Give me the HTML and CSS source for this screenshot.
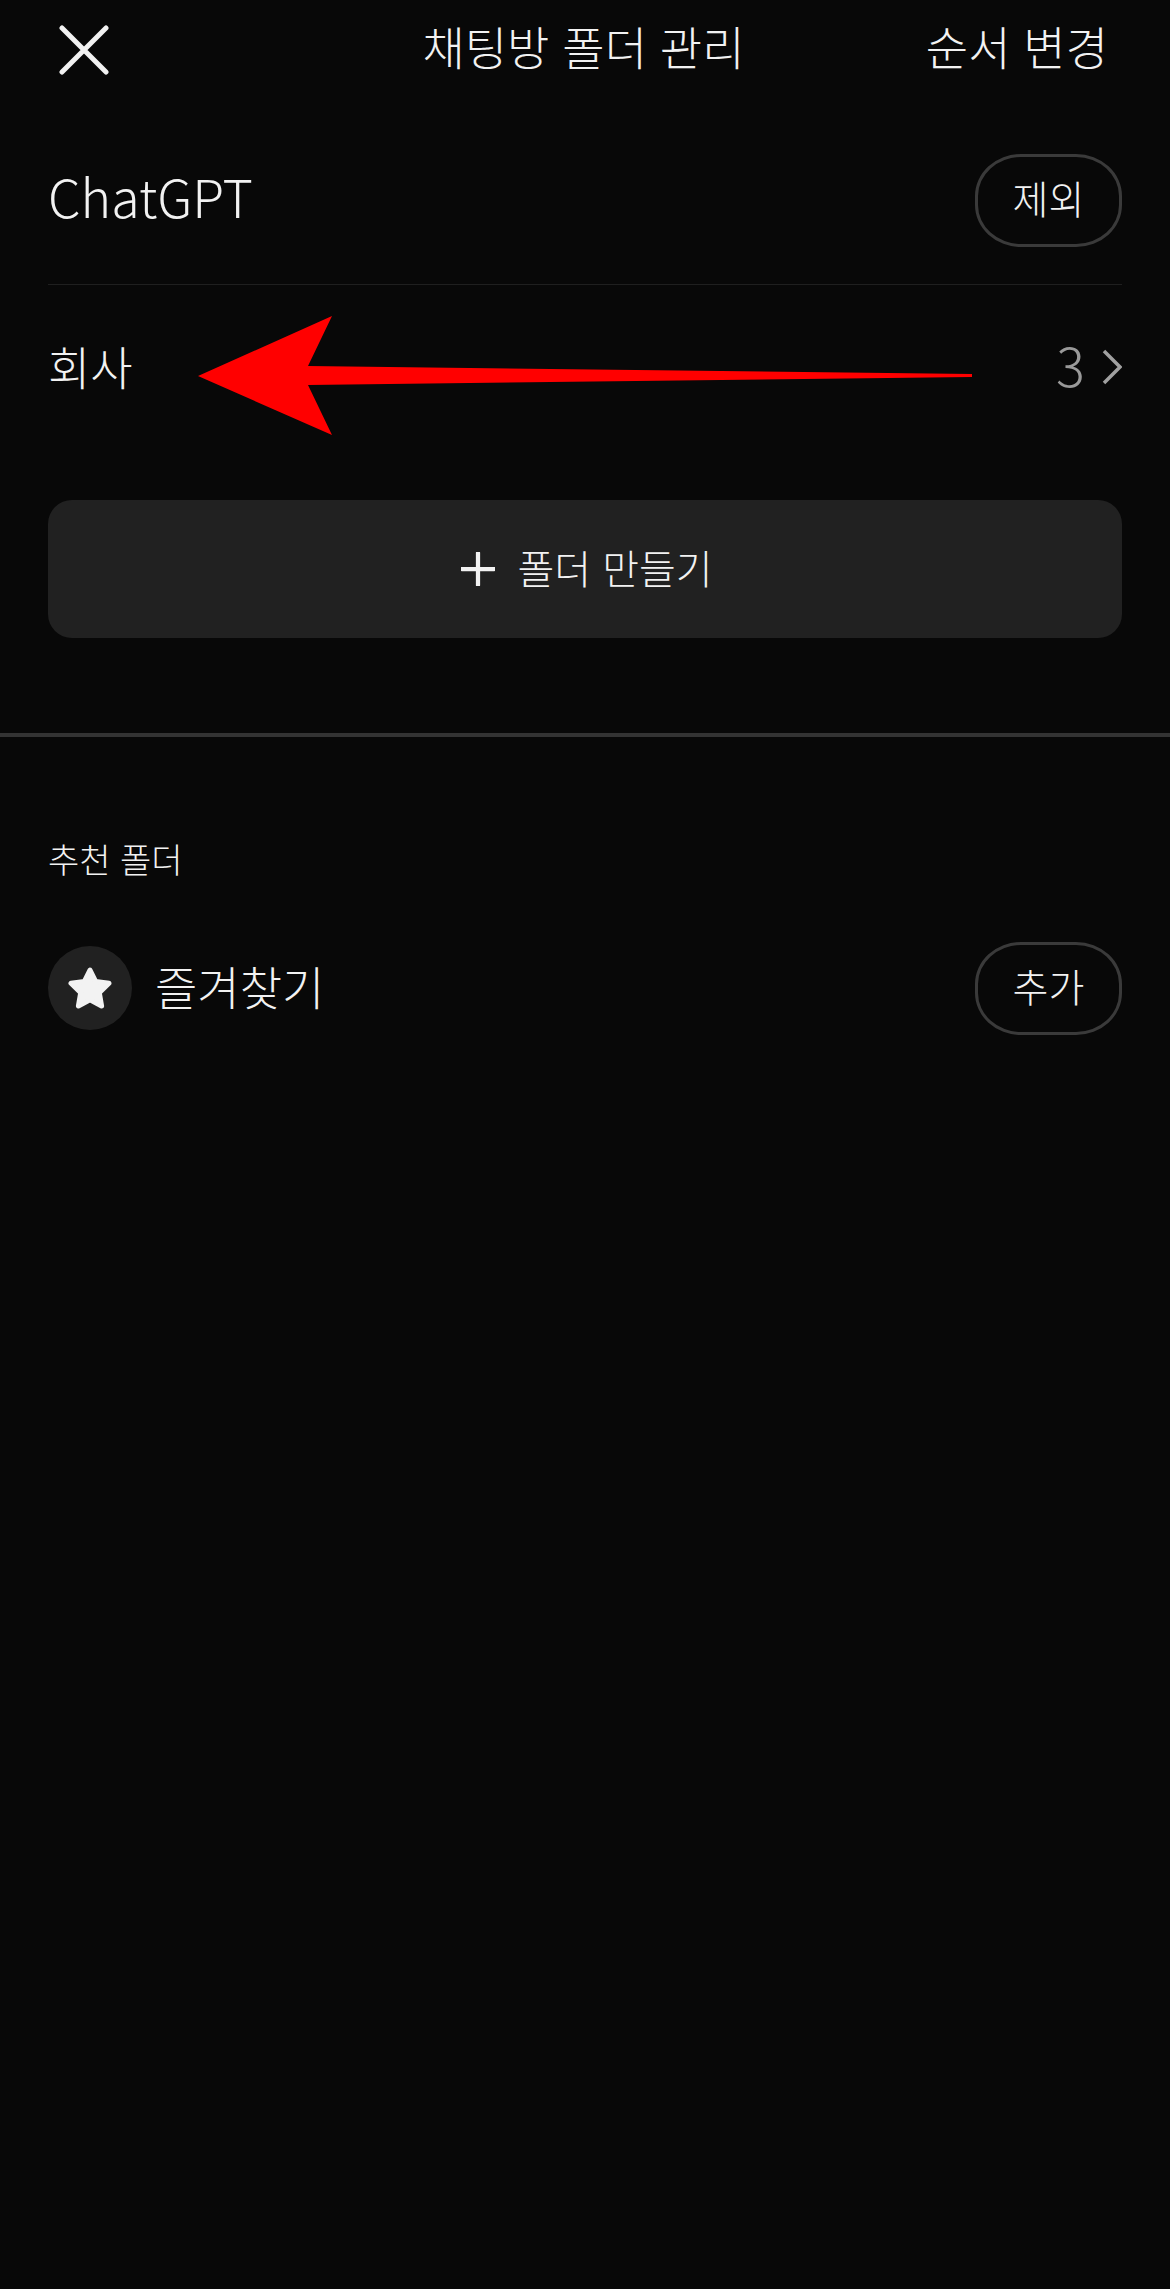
FILE: index.html
```html
<!DOCTYPE html>
<html lang="ko">
<head>
  <meta charset="UTF-8">
  <title>채팅방 폴더 관리</title>
  <link rel="stylesheet" href="styles.css">
</head>
<body>
  <!-- Top Bar -->
  <header class="top-bar">
    <svg class="close-icon" viewBox="0 0 50 50" width="50" height="50">
      <path d="M3 3 L47 47 M47 3 L3 47" />
    </svg>
    <h1 class="title">채팅방 폴더 관리</h1>
    <span class="reorder">순서 변경</span>
  </header>

  <!-- Folder List -->
  <section class="folders">
    <div class="row row-first">
      <span class="row-name name-latin">ChatGPT</span>
      <span class="pill">제외</span>
    </div>
    <div class="row row-second">
      <span class="row-name">회사</span>
      <span class="count">3
        <svg class="chevron" viewBox="0 0 20 36" width="20" height="36">
          <path d="M2 2 L18 18 L2 34" />
        </svg>
      </span>
    </div>
    <div class="add-button">
      <svg class="plus-icon" viewBox="0 0 36 36" width="36" height="36">
        <path d="M18 1 V35 M1 18 H35" />
      </svg>
      <span class="add-text">폴더 만들기</span>
    </div>
  </section>

  <div class="section-line"></div>

  <!-- Suggested -->
  <section class="suggested">
    <h2 class="suggested-label">추천 폴더</h2>
    <div class="row">
      <div class="row-left">
        <span class="star-badge">
          <svg viewBox="0 0 44 42" width="44" height="42">
            <path class="star" d="M22 3 L27.6 14.4 L41 16.3 L31.3 25.8 L33.6 39 L22 32.8 L10.4 39 L12.7 25.8 L3 16.3 L16.4 14.4 Z" />
          </svg>
        </span>
        <span class="row-name name-fav">즐겨찾기</span>
      </div>
      <span class="pill">추가</span>
    </div>
  </section>

  <!-- Annotation -->
  <svg class="red-arrow" viewBox="0 0 1170 2289" width="1170" height="2289">
    <polygon points="198,376 332,316 308,366 972,374 972,377 308,385 332,435" />
  </svg>
</body>
</html>
```

FILE: styles.css
```css
/* Basic Reset */
* {
  box-sizing: border-box;
  margin: 0;
  padding: 0;
}

body {
  position: relative;
  width: 1170px;
  height: 2289px;
  overflow: hidden;
  background-color: #080808;
  color: #f2f2f2;
  font-family: "Noto Sans CJK KR", "Noto Sans", sans-serif;
  font-weight: 300;
}

/* Top Bar */
.top-bar {
  display: grid;
  grid-template-columns: 1fr auto 1fr;
  align-items: center;
  height: 94px;
  padding: 0 62px 4px 59px;
  font-size: 46px;
}

.close-icon {
  margin-top: 10px;
}

.close-icon path {
  fill: none;
  stroke: #f2f2f2;
  stroke-width: 5;
  stroke-linecap: round;
}

.title {
  font-size: 46px;
  font-weight: 300;
}

.reorder {
  justify-self: end;
}

/* Folder List */
.folders {
  padding: 60px 48px 95px;
}

.row {
  display: flex;
  justify-content: space-between;
  align-items: center;
}

.row-first {
  padding-bottom: 37px;
  border-bottom: 1px solid #1f1f1f;
}

.row-second {
  height: 160px;
}

.row-name {
  font-size: 46px;
}

.name-latin {
  padding-bottom: 10px;
  font-size: 52px;
}

.name-fav {
  padding-bottom: 8px;
}

.pill {
  display: flex;
  align-items: center;
  justify-content: center;
  width: 147px;
  height: 93px;
  padding-bottom: 7px;
  border: 3px solid #3a3a3a;
  border-radius: 46px / 42px;
  font-size: 39px;
}

.count {
  display: flex;
  align-items: center;
  gap: 17px;
  padding-bottom: 3px;
  color: #999;
  font-size: 54px;
}

.chevron {
  margin-top: 6px;
}

.chevron path {
  fill: none;
  stroke: #a0a0a0;
  stroke-width: 3.5;
}

.add-button {
  display: flex;
  align-items: center;
  justify-content: center;
  gap: 22px;
  height: 138px;
  margin-top: 55px;
  border-radius: 24px;
  background-color: #212121;
  font-size: 40px;
}

.add-text {
  padding-bottom: 5px;
}

.plus-icon {
  margin-left: 4px;
  width: 34px;
  height: 34px;
}

.plus-icon path {
  fill: none;
  stroke: #f2f2f2;
  stroke-width: 4.5;
  stroke-linecap: round;
}

.section-line {
  height: 4px;
  background-color: #333;
}

/* Suggested */
.suggested {
  padding: 100px 48px 0;
}

.suggested-label {
  height: 44px;
  margin-bottom: 61px;
  font-size: 34px;
  font-weight: 300;
  line-height: 44px;
}

.row-left {
  display: flex;
  align-items: center;
  gap: 23px;
}

.star-badge {
  display: flex;
  align-items: center;
  justify-content: center;
  width: 84px;
  height: 84px;
  margin-bottom: 1px;
  border-radius: 50%;
  background-color: #212121;
}

.star {
  fill: #f2f2f2;
  stroke: #f2f2f2;
  stroke-width: 5;
  stroke-linejoin: round;
}

/* Annotation */
.red-arrow {
  position: absolute;
  top: 0;
  left: 0;
}

.red-arrow polygon {
  fill: #ff0000;
}
```
